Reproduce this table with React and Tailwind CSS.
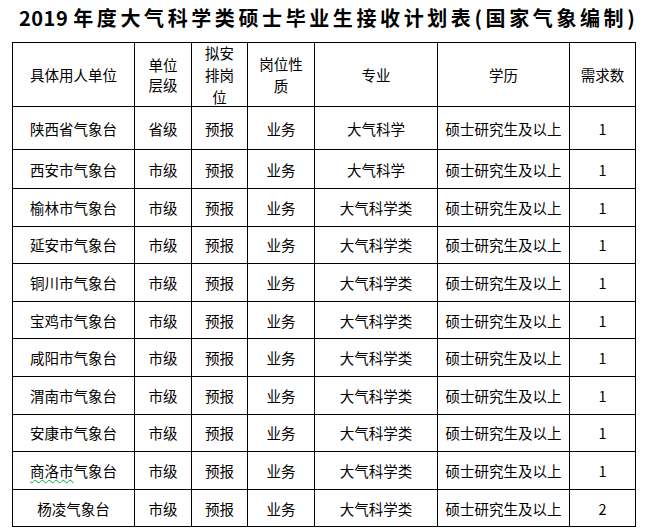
import React from "react";

const rows = [
  ["陕西省气象台", "省级", "预报", "业务", "大气科学", "硕士研究生及以上", "1"],
  ["西安市气象台", "市级", "预报", "业务", "大气科学", "硕士研究生及以上", "1"],
  ["榆林市气象台", "市级", "预报", "业务", "大气科学类", "硕士研究生及以上", "1"],
  ["延安市气象台", "市级", "预报", "业务", "大气科学类", "硕士研究生及以上", "1"],
  ["铜川市气象台", "市级", "预报", "业务", "大气科学类", "硕士研究生及以上", "1"],
  ["宝鸡市气象台", "市级", "预报", "业务", "大气科学类", "硕士研究生及以上", "1"],
  ["咸阳市气象台", "市级", "预报", "业务", "大气科学类", "硕士研究生及以上", "1"],
  ["渭南市气象台", "市级", "预报", "业务", "大气科学类", "硕士研究生及以上", "1"],
  ["安康市气象台", "市级", "预报", "业务", "大气科学类", "硕士研究生及以上", "1"],
  ["商洛市气象台", "市级", "预报", "业务", "大气科学类", "硕士研究生及以上", "1"],
  ["杨凌气象台", "市级", "预报", "业务", "大气科学类", "硕士研究生及以上", "2"],
];

const rowH = ["h-[42px]", "h-[38px]"];

function Cell({ h, children, lh }) {
  return (
    <td className="border border-black p-0 text-center align-middle whitespace-nowrap">
      <div className={`${h} ${lh || ""} flex items-center justify-center`}>
        <div>{children}</div>
      </div>
    </td>
  );
}

export default function App() {
  return (
    <div
      className="w-[647px] h-[532px] bg-white text-black overflow-hidden"
      style={{ fontFamily: '"Noto Sans CJK SC", "Noto Sans", sans-serif' }}
    >
      <div className="pl-[19px] pt-[4px] h-[42px] text-[20px] leading-[28px] font-bold tracking-[3.6px] whitespace-nowrap">
        <span className="tracking-[0.5px]">2019 </span>年度大气科学类硕士毕业生接收计划表(国家气象编制)
      </div>
      <table className="ml-[12px] border-collapse table-fixed w-[623px] text-[14.5px] leading-[21px]">
        <colgroup>
          <col className="w-[122px]" />
          <col className="w-[57px]" />
          <col className="w-[56px]" />
          <col className="w-[67px]" />
          <col className="w-[123px]" />
          <col className="w-[132px]" />
          <col className="w-[66px]" />
        </colgroup>
        <tbody>
          <tr>
            <Cell h="h-[63px]">具体用人单位</Cell>
            <Cell h="h-[63px]" lh="leading-[20px]">
              单位<br />层级
            </Cell>
            <Cell h="h-[63px]" lh="leading-[22px]">
              拟安<br />排岗<br />位
            </Cell>
            <Cell h="h-[63px]" lh="leading-[22px]">
              岗位性<br />质
            </Cell>
            <Cell h="h-[63px]">专业</Cell>
            <Cell h="h-[63px]">学历</Cell>
            <Cell h="h-[63px]">需求数</Cell>
          </tr>
          {rows.map((r, i) => (
            <tr key={i}>
              {r.map((c, j) => (
                <Cell key={j} h={rowH[i] || "h-[36.6px]"}>
                  {i === 9 && j === 0 ? (
                    <>
                      <span className="underline decoration-wavy decoration-green-600 decoration-1 underline-offset-2">
                        商洛市
                      </span>
                      气象台
                    </>
                  ) : (
                    c
                  )}
                </Cell>
              ))}
            </tr>
          ))}
        </tbody>
      </table>
    </div>
  );
}
